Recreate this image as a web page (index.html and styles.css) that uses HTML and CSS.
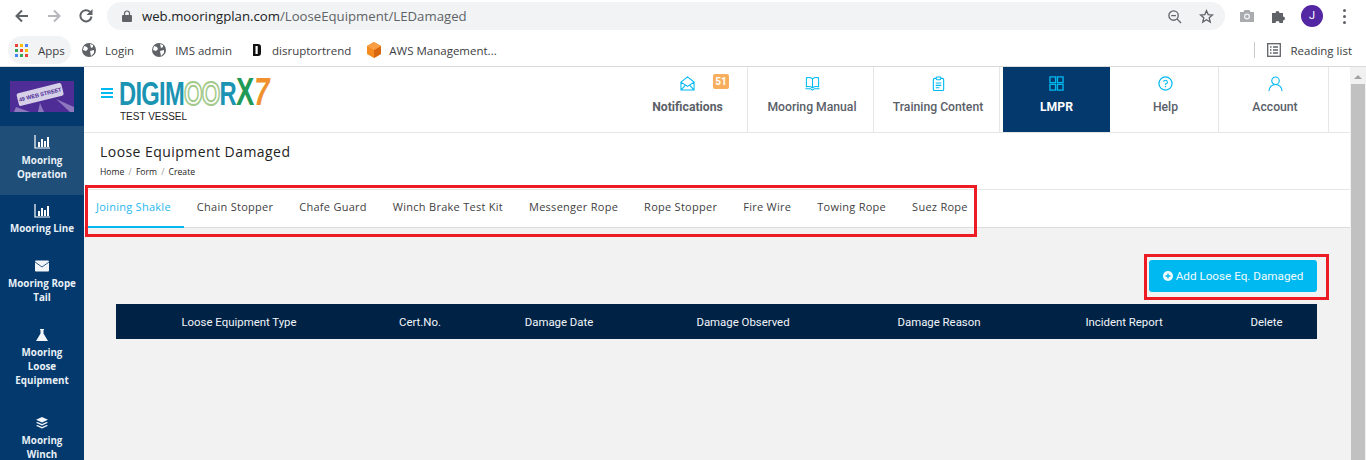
FILE: index.html
```html
<!DOCTYPE html>
<html lang="en">
<head>
  <meta charset="UTF-8">
  <title>Loose Equipment Damaged</title>
  <link rel="stylesheet" href="styles.css">
</head>
<body>
  <div class="toolbar">
    <svg class="tool-btn" viewBox="0 0 16 16"><path d="M14 8H3M8 2.500 2.500 8 8 13.500" fill="none" stroke="#5f6368" stroke-width="2"/></svg>
    <svg class="tool-btn" viewBox="0 0 16 16"><path d="M2 8h11M8 2.500 13.500 8 8 13.500" fill="none" stroke="#b6b8bb" stroke-width="2"/></svg>
    <svg class="tool-btn" viewBox="0 0 16 16"><path d="M13.500 8.500A5.600 5.600 0 1 1 12 3.900" fill="none" stroke="#5f6368" stroke-width="2"/><path d="M14.500 1v6h-6z" fill="#5f6368"/></svg>
    <div class="address">
      <svg class="lock" viewBox="0 0 10 12"><path d="M2.500 5V3.500a2.500 2.500 0 0 1 5 0V5" fill="none" stroke="#5f6368" stroke-width="1.200"/><rect y="5" width="10" height="7" rx="1" fill="#5f6368"/></svg>
      <span class="url"><b>web.mooringplan.com</b>/LooseEquipment/LEDamaged</span>
      <svg class="addr-icon" viewBox="0 0 16 16"><circle cx="7" cy="7" r="5" fill="none" stroke="#5f6368" stroke-width="1.400"/><path d="M4.500 7h5M10.800 10.800 15 15" stroke="#5f6368" stroke-width="1.400"/></svg>
      <svg class="addr-icon" viewBox="0 0 16 16"><path d="M8 1.800 9.800 6l4.600.4-3.500 3 1.100 4.500L8 11.500l-4 2.400 1.100-4.500-3.500-3L6.200 6z" fill="none" stroke="#5f6368" stroke-width="1.400"/></svg>
    </div>
    <div class="ext">
      <svg class="ext-icon" viewBox="0 0 16 16"><path d="M1 4h3.500l1-2h5l1 2H15v10H1z" fill="#a9abae"/><circle cx="8" cy="8.500" r="3" fill="#f1f3f4"/><circle cx="8" cy="8.500" r="1.700" fill="#a9abae"/></svg>
      <svg class="ext-icon" viewBox="0 0 16 16"><path d="M1 5h3.500a2 2 0 1 1 4 0H12v3.500a2 2 0 1 1 0 4V15H8.500a2 2 0 1 0-4 0H1z" fill="#5f6368"/></svg>
      <span class="avatar">J</span>
      <span class="dots"><i></i><i></i><i></i></span>
    </div>
  </div>

  <div class="bookmarks">
    <div class="bm bm-apps">
      <span class="apps-grid"><i class="r"></i><i class="y"></i><i class="b"></i><i class="g"></i><i class="r"></i><i class="y"></i><i class="b"></i><i class="g"></i><i class="r"></i></span>
      Apps
    </div>
    <div class="bm"><svg class="globe" viewBox="0 0 14 14"><circle cx="7" cy="7" r="7" fill="#5f6368"/><path d="M2 3l3 1 1 2-2 2-3-1zM8 1l3 1 0 2-2 1zM8 8l4-1 0 3-3 3z" fill="#fff"/></svg>Login</div>
    <div class="bm bm-ims"><svg class="globe" viewBox="0 0 14 14"><circle cx="7" cy="7" r="7" fill="#5f6368"/><path d="M2 3l3 1 1 2-2 2-3-1zM8 1l3 1 0 2-2 1zM8 8l4-1 0 3-3 3z" fill="#fff"/></svg>IMS admin</div>
    <div class="bm bm-disrupt"><svg class="fav-d" viewBox="0 0 8 12"><path d="M0 0h5a3 3 0 0 1 3 3v6a3 3 0 0 1-3 3H0z" fill="#111"/><rect x="2.500" y="2" width="2.200" height="8" fill="#fff"/></svg>disruptortrend</div>
    <div class="bm"><svg class="fav-aws" viewBox="0 0 16 16"><path d="M8 0l7 4v8l-7 4-7-4V4z" fill="#f58a1f"/><path d="M8 8l7-4v8l-7 4z" fill="#d9670f"/><path d="M8 0l7 4-7 4-7-4z" fill="#fa9f45"/></svg>AWS Management...</div>
    <div class="reading">
      <svg class="reading-icon" viewBox="0 0 14 14"><rect x=".7" y=".7" width="12.600" height="12.600" fill="none" stroke="#5f6368" stroke-width="1.300"/><path d="M3 4h1.500M6 4h5M3 7h1.500M6 7h5M3 10h1.500M6 10h5" stroke="#5f6368" stroke-width="1.300"/></svg>
      Reading list
    </div>
  </div>

  <div class="app">
    <aside class="sidebar">
      <div class="side-logo">
        <svg width="64" height="31" viewBox="0 0 64 31"><rect width="64" height="31" fill="#4f2d96"/><path d="M6 26 20 31H4zM30 22l-2 9h6zM46 18l14 13h4V26z" fill="#8d78bf"/><g transform="rotate(-14 30 13)"><rect x="7" y="7" width="46" height="13" rx="2" fill="#d5cfe8"/><text class="side-logo-text" x="30" y="15.500" text-anchor="middle">49 WEB STREET</text></g></svg>
      </div>
      <a class="side-item active">
        <svg class="side-icon" viewBox="0 0 16 14"><path d="M1 0v13h15" fill="none" stroke="#fff" stroke-width="1.200"/><path d="M4 7h2v5H4zM7 4h2v8H7zM10 6h2v6h-2zM13 2h2v10h-2z" fill="#fff"/></svg>
        Mooring Operation
      </a>
      <a class="side-item">
        <svg class="side-icon" viewBox="0 0 16 14"><path d="M1 0v13h15" fill="none" stroke="#fff" stroke-width="1.200"/><path d="M4 7h2v5H4zM7 4h2v8H7zM10 6h2v6h-2zM13 2h2v10h-2z" fill="#fff"/></svg>
        Mooring Line
      </a>
      <a class="side-item">
        <svg class="side-icon" viewBox="0 0 16 14"><g transform="translate(1 1.500)"><rect width="14" height="11" rx="1" fill="#f2f6fb"/><path d="M0 1.500 7 6.500l7-5" fill="none" stroke="#1f4e79" stroke-width=".9"/></g></svg>
        Mooring Rope Tail
      </a>
      <a class="side-item">
        <svg class="side-icon" viewBox="0 0 16 14"><path d="M6 1h4v1H9.500v3.500L14 13H2L6.500 5.500V2H6z" fill="#f2f6fb"/></svg>
        Mooring<br>Loose<br>Equipment
      </a>
      <a class="side-item side-winch">
        <svg class="side-icon" viewBox="0 0 16 14"><path d="M8 1l6 2.800-6 2.800L2 3.800zM3.500 6 8 8.100 12.500 6 14 6.800 8 9.600 2 6.800zM3.500 9 8 11.100 12.500 9 14 9.800 8 12.600 2 9.800z" fill="#f2f6fb"/></svg>
        Mooring Winch
      </a>
    </aside>

    <main class="main">
      <header class="topbar">
        <div class="brand">
          <div class="brand-row">
            <span class="burger"><i></i><i></i><i></i></span>
            <span class="logo">DIGIM<span class="logo-o">OO</span>R<span class="logo-x">X</span><span class="logo-7">7</span></span>
          </div>
          <div class="vessel">TEST VESSEL</div>
        </div>
        <nav class="topnav">
          <a class="nav-item nav-notif">
            <svg class="nav-icon" viewBox="0 0 16 16"><path d="M1 6.500 8 1l7 5.500V15H1zM1 6.500 8 11l7-4.500M1 15l5-5.500M15 15l-5-5.500" fill="none" stroke="#00b9f1" stroke-width="1.100"/></svg>
            <span class="badge">51</span>
            <span class="nav-label strong">Notifications</span>
          </a>
          <a class="nav-item nav-manual">
            <svg class="nav-icon" viewBox="0 0 16 16"><path d="M8 3C6 1.500 3.500 1.500 1.500 2v9.500c2-.5 4.500-.5 6.500 1 2-1.500 4.500-1.500 6.500-1V2C12.500 1.500 10 1.500 8 3zM8 3v9.500M.5 13.500H6l2 1.500 2-1.500h5.500" fill="none" stroke="#00b9f1" stroke-width="1.100"/></svg>
            <span class="nav-label">Mooring Manual</span>
          </a>
          <a class="nav-item nav-training">
            <svg class="nav-icon" viewBox="0 0 16 16"><rect x="2.500" y="2.500" width="11" height="13" rx="1.500" fill="none" stroke="#00b9f1" stroke-width="1.200"/><rect x="5.500" y="1" width="5" height="3" rx="1" fill="#fff" stroke="#00b9f1" stroke-width="1.100"/><path d="M5 7.500h6M5 10h6M5 12.500h4" stroke="#00b9f1" stroke-width="1.100"/></svg>
            <span class="nav-label">Training Content</span>
          </a>
          <a class="nav-item nav-lmpr">
            <svg class="nav-icon" viewBox="0 0 16 16"><path d="M1 1h6v6H1zM9 1h6v6H9zM1 9h6v6H1zM9 9h6v6H9z" fill="none" stroke="#00b9f1" stroke-width="1.400"/></svg>
            <span class="nav-label">LMPR</span>
          </a>
          <a class="nav-item nav-help">
            <svg class="nav-icon" viewBox="0 0 16 16"><circle cx="8" cy="8" r="7" fill="none" stroke="#00b9f1" stroke-width="1.300"/><path d="M6 6.300A2 2 0 1 1 8 8.500v1" fill="none" stroke="#00b9f1" stroke-width="1.200"/><circle cx="8" cy="11.300" r=".8" fill="#00b9f1"/></svg>
            <span class="nav-label">Help</span>
          </a>
          <a class="nav-item nav-account">
            <svg class="nav-icon" viewBox="0 0 16 16"><circle cx="8" cy="5" r="4" fill="none" stroke="#00b9f1" stroke-width="1.200"/><path d="M1 16c0-4 3-7 7-7s7 3 7 7" fill="none" stroke="#00b9f1" stroke-width="1.200"/></svg>
            <span class="nav-label">Account</span>
          </a>
        </nav>
      </header>

      <section class="page-head">
        <h1>Loose Equipment Damaged</h1>
        <div class="crumbs">Home <em>/</em> Form <em>/</em> Create</div>
      </section>

      <div class="tabs">
        <a class="tab active">Joining Shakle</a>
        <a class="tab">Chain Stopper</a>
        <a class="tab">Chafe Guard</a>
        <a class="tab">Winch Brake Test Kit</a>
        <a class="tab">Messenger Rope</a>
        <a class="tab">Rope Stopper</a>
        <a class="tab">Fire Wire</a>
        <a class="tab">Towing Rope</a>
        <a class="tab">Suez Rope</a>
      </div>

      <section class="content">
        <div class="actions">
          <a class="add-btn">
            <svg class="add-icon" viewBox="0 0 10 10"><circle cx="5" cy="5" r="5" fill="#f2fbfe"/><path d="M5 2.500v5M2.500 5h5" stroke="#00b9f1" stroke-width="1.300"/></svg>
            Add Loose Eq. Damaged
          </a>
        </div>
        <div class="table-head">
          <div>Loose Equipment Type</div>
          <div>Cert.No.</div>
          <div>Damage Date</div>
          <div>Damage Observed</div>
          <div>Damage Reason</div>
          <div>Incident Report</div>
          <div>Delete</div>
        </div>
      </section>

      <div class="mark mark-tabs"></div>
      <div class="mark mark-btn"></div>
    </main>

    <div class="scrollbar">
      <span class="scroll-up"></span>
      <span class="scroll-thumb"></span>
    </div>
  </div>
</body>
</html>
```

FILE: styles.css
```css
*{
  margin: 0px;
  padding: 0px;
  box-sizing: border-box;
}
html,body{
  height: 100%;
  overflow: hidden;
}
body{
  display: flex;
  flex-direction: column;
  font-family: Roboto, sans-serif;
  background-color: #fff;
}
a{
  display: block;
}

/* browser bar */
.toolbar{
  height: 32px;
  padding: 2px 0 0 14px;
  display: flex;
  align-items: flex-start;
}
.tool-btn{
  width: 16px;
  height: 16px;
  margin: 6px 16px 0 0;
}
.tool-btn:nth-child(3){
  margin-right: 0;
}
.address{
  width: 1118px;
  height: 28px;
  margin-left: 13px;
  padding: 0 9px 0 15px;
  background-color: #f1f3f4;
  border-radius: 14px;
  display: flex;
  align-items: center;
  font-family: "Open Sans", sans-serif;
  font-size: 13.200px;
  color: #5f6368;
}
.lock{
  width: 10px;
  height: 12px;
  margin-right: 10px;
}
.url{
  flex: 1;
}
.url b{
  font-weight: 400;
  color: #202124;
}
.addr-icon{
  width: 15px;
  height: 15px;
  margin-left: 17px;
}
.addr-icon:last-child{
  margin-right: 2px;
}
.ext{
  display: flex;
  align-items: center;
  height: 28px;
  margin-left: 14px;
}
.ext-icon{
  width: 16px;
  height: 16px;
  margin-right: 16px;
}
.ext-icon:nth-child(2){
  margin-right: 14px;
}
.avatar{
  width: 22px;
  height: 22px;
  border-radius: 50%;
  background-color: #5327a4;
  color: #fff;
  font-size: 11px;
  text-align: center;
  line-height: 22px;
}
.dots{
  margin-left: 20px;
  display: flex;
  flex-direction: column;
  gap: 3px;
}
.dots i{
  width: 3px;
  height: 3px;
  border-radius: 50%;
  background-color: #5f6368;
}
.bookmarks{
  height: 35px;
  padding: 2px 14px 0 8px;
  display: flex;
  align-items: center;
  border-bottom: 1px solid #d8dadc;
  font-family: "Open Sans", sans-serif;
  font-size: 11.500px;
  color: #3c4043;
}
.bm{
  display: flex;
  align-items: center;
  margin-right: 18px;
  white-space: nowrap;
}
.bm-ims{
  margin-right: 21px;
}
.bm-disrupt{
  margin-right: 15px;
}
.bm-apps{
  width: 63px;
  height: 28px;
  padding-left: 7px;
  margin-right: 11px;
  background-color: #f1f3f4;
  border-radius: 14px;
}
.apps-grid{
  width: 13px;
  height: 13px;
  margin-right: 10px;
  display: grid;
  grid-template-columns: repeat(3,3px);
  gap: 2px;
}
.apps-grid i.r{ background-color: #ea4335; }
.apps-grid i.y{ background-color: #fbbc04; }
.apps-grid i.b{ background-color: #4285f4; }
.apps-grid i.g{ background-color: #34a853; }
.globe{
  width: 14px;
  height: 14px;
  margin-right: 9px;
}
.fav-d{
  width: 8px;
  height: 12px;
  margin-right: 11px;
}
.fav-aws{
  width: 16px;
  height: 16px;
  margin-right: 7px;
}
.reading{
  margin-left: auto;
  padding-left: 12px;
  height: 16px;
  display: flex;
  align-items: center;
  border-left: 1px solid #c6c8ca;
}
.reading-icon{
  width: 14px;
  height: 14px;
  margin-right: 9px;
}

/* app */
.app{
  flex: 1;
  min-height: 0;
  display: flex;
}
.sidebar{
  width: 84px;
  flex-shrink: 0;
  background-color: #03396c;
  color: #e9f0f7;
  font-family: "Open Sans", sans-serif;
  font-size: 9.800px;
  font-weight: 700;
  line-height: 14px;
  text-align: center;
}
.side-logo{
  height: 59px;
  padding: 14px 0 0 10px;
}
.side-logo svg{
  display: block;
}
.side-logo-text{
  font-family: "Liberation Sans", sans-serif;
  font-size: 5.500px;
  font-weight: 700;
  fill: #4f2d96;
}
.side-item{
  padding: 9px 6px 14px;
}
.side-winch{
  margin-top: 5px;
}
.side-item.active{
  padding-bottom: 13px;
  background-color: #1f4e79;
}
.side-icon{
  display: block;
  width: 16px;
  height: 14px;
  margin: 0 auto 4px;
}
.active .side-icon{
  margin-bottom: 5px;
}
.main{
  flex: 1;
  min-width: 0;
  position: relative;
  display: flex;
  flex-direction: column;
  background-color: #f2f2f2;
}
.topbar{
  height: 66px;
  background-color: #fff;
  border-bottom: 1px solid #e6e6e6;
  display: flex;
  justify-content: space-between;
  padding-right: 21px;
}
.brand{
  padding: 11px 0 0 17px;
}
.brand-row{
  display: flex;
  align-items: center;
  height: 29px;
}
.burger{
  width: 12px;
  margin-right: 6px;
  display: flex;
  flex-direction: column;
  gap: 2px;
}
.burger i{
  height: 2px;
  background-color: #00b9f1;
}
.logo{
  display: block;
  font-family: "Liberation Sans", sans-serif;
  font-size: 33px;
  font-weight: 700;
  letter-spacing: -1px;
  line-height: 29px;
  white-space: nowrap;
  color: #1b93b3;
  transform: scaleX(.72);
  transform-origin: left center;
}
.logo-o{
  color: transparent;
  -webkit-text-stroke: 2px #a3c98b;
  letter-spacing: -1px;
}
.logo-x{
  font-size: 38px;
  letter-spacing: 0;
  color: #1f9a57;
}
.logo-7{
  font-size: 38px;
  font-style: italic;
  color: #f0912e;
}
.vessel{
  margin: 4px 0 0 19px;
  font-family: "Liberation Sans", sans-serif;
  font-size: 10px;
  color: #222;
}
.topnav{
  display: flex;
}
.nav-item{
  position: relative;
  width: 126px;
  padding: 9px 0 0 3px;
  text-align: center;
  border-right: 1px solid #e6e6e6;
  font-size: 12.200px;
  font-weight: 500;
  color: #5a6068;
}
.nav-notif{
  width: 121px;
  padding-left: 1px;
}
.nav-training{
  margin-right: 3px;
}
.nav-lmpr{
  width: 107px;
  padding-left: 0;
  background-color: #03396c;
  color: #fff;
  border-right: 0;
  font-weight: 700;
}
.nav-help{
  width: 109px;
}
.nav-account{
  width: 110px;
}
.nav-icon{
  display: block;
  width: 15px;
  height: 15px;
  margin: 0 auto 8px;
}
.nav-label{
  display: block;
  line-height: 17px;
}
.nav-label.strong{
  font-weight: 700;
}
.badge{
  position: absolute;
  top: 7px;
  left: 86px;
  width: 16px;
  height: 15px;
  border-radius: 2px;
  background-color: #f7ae5d;
  color: #fff;
  font-size: 10px;
  font-weight: 700;
  line-height: 15px;
}
.page-head{
  height: 57px;
  padding: 9px 16px 0;
  background-color: #fff;
  border-bottom: 1px solid #e6e6e6;
  font-family: "Open Sans", sans-serif;
  color: #222;
}
.page-head h1{
  font-size: 14px;
  font-weight: 500;
  letter-spacing: .45px;
  line-height: 20px;
}
.crumbs{
  margin-top: 3px;
  font-size: 8.600px;
  line-height: 14px;
}
.crumbs em{
  font-style: normal;
  color: #999;
  margin: 0 2px;
}
.tabs{
  height: 38px;
  padding-left: 3px;
  background-color: #fff;
  border-bottom: 1px solid #dcdcdc;
  display: flex;
  font-family: "Open Sans", sans-serif;
  font-size: 11px;
  font-weight: 500;
  letter-spacing: .27px;
  color: #3f3f3f;
}
.tab{
  padding: 0 13px;
  line-height: 34px;
  height: 38px;
}
.tab.active{
  padding-left: 9px;
  color: #1fb8ee;
  border-bottom: 2px solid #00b9f1;
}
.content{
  flex: 1;
  padding: 32px 33px 0 32px;
}
.actions{
  display: flex;
  justify-content: flex-end;
}
.add-btn{
  width: 168px;
  height: 32px;
  background-color: #00b9f1;
  border-radius: 3px;
  color: #f2fbfe;
  font-size: 11.700px;
  display: flex;
  align-items: center;
  justify-content: center;
  gap: 3px;
}
.add-icon{
  width: 10px;
  height: 10px;
}
.table-head{
  height: 35px;
  margin-top: 12px;
  background-color: #002244;
  color: #f2f6fb;
  font-size: 11.400px;
  display: grid;
  grid-template-columns: 246px 116px 162px 206px 186px 184px 101px;
  align-items: center;
  text-align: center;
}

/* red note boxes over the shot */
.mark{
  position: absolute;
  border: 3px solid #ed1c24;
}
.mark-tabs{
  left: 1px;
  top: 118px;
  width: 892px;
  height: 52px;
}
.mark-btn{
  left: 1060px;
  top: 187px;
  width: 185px;
  height: 46px;
}
.scrollbar{
  width: 16px;
  flex-shrink: 0;
  background-color: #f1f1f1;
  padding-top: 8px;
}
.scroll-up{
  display: block;
  width: 0;
  margin: 0 auto;
  border: 4px solid transparent;
  border-top: 0;
  border-bottom: 4px solid #a3a3a3;
}
.scroll-thumb{
  display: block;
  height: 380px;
  margin: 5px 1px 0;
  background-color: #c1c1c1;
}
```
